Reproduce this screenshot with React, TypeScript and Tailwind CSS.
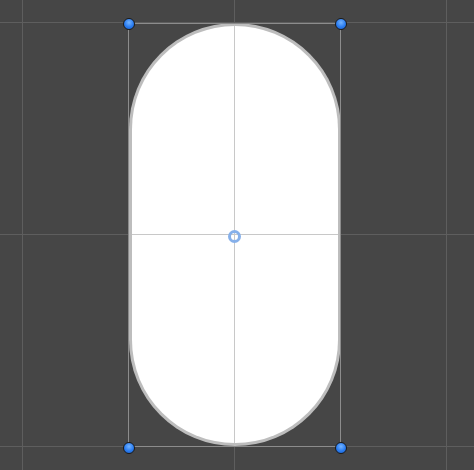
import React from "react";

const Handle = ({ x, y }: { x: number; y: number }) => (
  <div
    className="absolute w-[12px] h-[12px] rounded-full border border-[#1a1a1a] bg-[radial-gradient(circle_at_50%_35%,#74b4ff_0%,#2a7cf0_55%,#1a5fc8_100%)]"
    style={{ left: x - 6, top: y - 6 }}
  />
);

export default function App() {
  return (
    <div className="relative w-[474px] h-[470px] overflow-hidden bg-[#464646]">
      {/* grid vertical */}
      <div className="absolute top-0 bottom-0 left-[22px] w-px bg-[#5e5e5e]" />
      <div className="absolute top-0 bottom-0 left-[234px] w-px bg-[#5e5e5e]" />
      <div className="absolute top-0 bottom-0 left-[446px] w-px bg-[#5e5e5e]" />
      {/* grid horizontal */}
      <div className="absolute left-0 right-0 top-[22px] h-px bg-[#5e5e5e]" />
      <div className="absolute left-0 right-0 top-[234px] h-px bg-[#5e5e5e]" />
      <div className="absolute left-0 right-0 top-[446px] h-px bg-[#5e5e5e]" />

      {/* capsule */}
      <div className="absolute left-[129px] top-[23px] w-[212px] h-[423px] rounded-[106px] bg-[#bdbdbd] p-[3px]">
        <div className="relative w-full h-full rounded-[103px] bg-white overflow-hidden">
          <div className="absolute top-0 bottom-0 left-[102px] w-px bg-[#c8c8c8]" />
          <div className="absolute left-0 right-0 top-[208px] h-px bg-[#c8c8c8]" />
        </div>
      </div>

      {/* rect outline */}
      <div className="absolute left-[128px] top-[23px] w-[213px] h-[424px] border border-[#8c8c8c]" />

      {/* pivot */}
      <div className="absolute left-[227.5px] top-[229.5px] w-[13px] h-[13px] rounded-full border-[3px] border-[#86b0ea] blur-[0.4px]" />

      <Handle x={128.5} y={23.5} />
      <Handle x={340.5} y={23.5} />
      <Handle x={128.5} y={447.5} />
      <Handle x={340.5} y={447.5} />
    </div>
  );
}
